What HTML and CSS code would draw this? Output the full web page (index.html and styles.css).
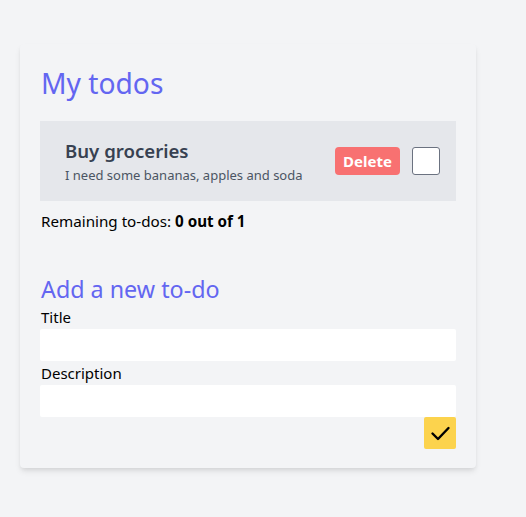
FILE: index.html
```html
<!DOCTYPE html>
<html lang="en">
<head>
<meta charset="utf-8">
<title>My todos</title>
<link rel="stylesheet" href="styles.css">
</head>
<body>
<main class="page">
  <section class="card">
    <h1 class="title">My todos</h1>
    <div class="item">
      <div class="item-text">
        <div class="item-title">Buy groceries</div>
        <div class="item-desc">I need some bananas, apples and soda</div>
      </div>
      <button class="delete" type="button">Delete</button>
      <span class="checkbox"></span>
    </div>
    <p class="remaining">Remaining to-dos: <b>0 out of 1</b></p>
    <h2 class="subtitle">Add a new to-do</h2>
    <form class="form">
      <label class="label" for="t">Title</label>
      <input class="input" id="t" type="text">
      <label class="label" for="d">Description</label>
      <input class="input" id="d" type="text">
      <div class="actions">
        <button class="submit" type="button" aria-label="Add">
          <svg width="32" height="32" viewBox="0 0 32 32" fill="none" stroke="#000" stroke-width="2.4" stroke-linecap="round" stroke-linejoin="round"><path d="M8.5 16.5 L14 22 L24.5 11"/></svg>
        </button>
      </div>
    </form>
  </section>
</main>
</body>
</html>
```
FILE: styles.css
```css
* { box-sizing: border-box; }
html, body { margin: 0; padding: 0; }
body {
  background: #f3f4f6;
  font-family: "Noto Sans", "Open Sans", sans-serif;
  color: #000;
  width: 526px;
  height: 517px;
}
.page {
  padding: 44px 50px 0 20px;
}
.card {
  width: 456px;
  background: #f3f4f6;
  border-radius: 4px;
  box-shadow: 0 4px 6px -1px rgba(0,0,0,0.1), 0 2px 4px -1px rgba(0,0,0,0.06);
  padding: 20px 20px 19px;
}
.title {
  margin: 0 0 21px;
  padding-left: 1px;
  font-size: 28.2px;
  line-height: 38px;
  height: 36px;
  font-weight: 400;
  color: #6366f1;
}
.item {
  display: flex;
  align-items: center;
  height: 80px;
  padding: 0 16px 0 25px;
  background: #e5e7eb;
}
.item-text { flex: 1; }
.item-title {
  font-size: 18.6px;
  line-height: 28px;
  font-weight: 600;
  color: #374151;
}
.item-desc {
  font-size: 13px;
  line-height: 20px;
  color: #4b5563;
}
.delete {
  width: 65px;
  height: 28px;
  border: 0;
  border-radius: 4px;
  background: #f87171;
  color: #fff;
  font-family: inherit;
  font-size: 15px;
  font-weight: 700;
  padding: 0;
}
.checkbox {
  width: 28px;
  height: 28px;
  margin-left: 12px;
  background: #fff;
  border: 1px solid #6b7280;
  border-radius: 3px;
}
.remaining {
  margin: 8px 0 0;
  padding-left: 1px;
  font-size: 15.2px;
  line-height: 25px;
  height: 24px;
}
.subtitle {
  margin: 40px 0 0;
  padding-left: 1px;
  font-size: 23.3px;
  line-height: 33px;
  height: 32px;
  font-weight: 400;
  color: #6366f1;
}
.form { display: flex; flex-direction: column; }
.label {
  padding-left: 1px;
  font-size: 15px;
  line-height: 25px;
  height: 24px;
}
.input {
  height: 32px;
  width: 100%;
  border: 0;
  border-radius: 2px;
  background: #fff;
  padding: 0 8px;
  font-family: inherit;
}
.actions { display: flex; justify-content: flex-end; }
.submit {
  width: 32px;
  height: 32px;
  padding: 0;
  border: 0;
  border-radius: 2px;
  background: #fcd34d;
  display: flex;
  align-items: center;
  justify-content: center;
}
.submit svg { display: block; }
```
